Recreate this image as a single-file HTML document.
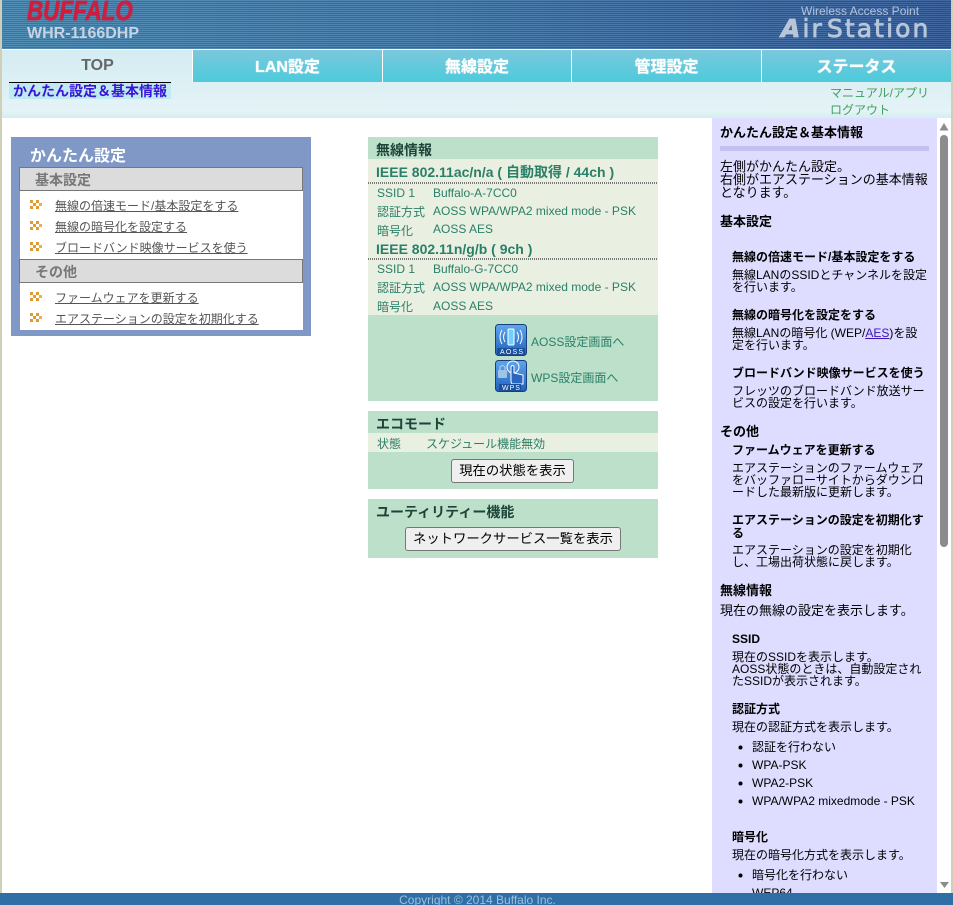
<!DOCTYPE html>
<html lang="ja"><head><meta charset="utf-8"><title>AirStation</title>
<style>
html,body{margin:0;padding:0;width:953px;height:905px;overflow:hidden;background:#fff}
body{position:relative;font-family:"Liberation Sans","Noto Sans CJK JP",sans-serif;font-size:12px}
div,a,span.t{position:absolute;white-space:nowrap}
.t{position:absolute;white-space:nowrap;line-height:16px;height:16px}
.b{font-weight:bold}
.tab{top:50px;height:32px;background:linear-gradient(#7cc8dc,#4ccadc);color:#fff;font-weight:bold;font-size:16px;line-height:35px;text-align:center;border-right:1px solid #fff;box-sizing:border-box;text-shadow:0 0 1px #fff}
.mi{color:#555;text-decoration:underline;font-size:12px;left:55px}
.gh{left:19px;width:284px;box-sizing:border-box;height:24px;background:#dcdcdc;border:1px solid #777;color:#777;font-weight:bold;font-size:14px;line-height:24px;padding-left:15px}
.g{color:#2a7f68;font-size:12px}
.gb{color:#2a7f68;font-size:14px;font-weight:bold}
.h{font-size:14px;font-weight:bold;left:376px;color:#1d4438}
.dot{left:368px;width:290px;height:2px;background:repeating-linear-gradient(90deg,#777 0 1px,transparent 1px 2px)}
.btn{background:#efefef;border:1px solid #767676;border-radius:3px;box-sizing:border-box;color:#000;font-size:13.333px;text-align:center;height:24px;line-height:22px}
.s{font-size:12px;color:#000;line-height:12px;height:12px}
.i{font-size:13px;color:#000;line-height:13px;height:13px}
.sb{font-size:12px;font-weight:bold;color:#000}
.sh{font-size:13px;font-weight:bold;color:#000}
</style></head><body>

<!-- page edges -->
<div style="left:0;top:0;width:2px;height:905px;background:#d0d0b8"></div>
<div style="left:951px;top:0;width:2px;height:905px;background:#d0d0b8"></div>

<!-- header -->
<div style="left:2px;top:0;width:949px;height:49px;background:repeating-linear-gradient(180deg,rgba(255,255,255,.1) 0 1px,rgba(0,0,0,.09) 1px 2px),linear-gradient(90deg,#3f82ad 0%,#3a73a5 45%,#2c5595 100%)"></div>
<div class="b" style="left:27px;top:-3px;font-size:28px;line-height:28px;color:#cc1f40;font-style:italic;transform:scaleX(.8);transform-origin:left;-webkit-text-stroke:.8px #cc1f40">BUFFALO</div>
<div class="b" style="left:27px;top:25px;font-size:16px;line-height:18px;color:#c6d3e2">WHR-1166DHP</div>
<div style="left:801px;top:4px;font-size:12px;line-height:14px;color:#b5c3d8">Wireless Access Point</div>
<div style="left:781px;top:15px;font-size:25px;line-height:28px;color:#b9c6d8;letter-spacing:2.1px;font-family:'DejaVu Sans',sans-serif;-webkit-text-stroke:.8px #b9c6d8"><span style="font-style:italic;font-weight:bold">A</span>ir<span style="margin-left:3px">Station</span></div>

<!-- nav background -->
<div style="left:2px;top:49px;width:949px;height:1px;background:#fff"></div>
<div style="left:2px;top:50px;width:949px;height:68px;background:linear-gradient(#d4ecf2,#e4f3f6 90%,#d2eff2)"></div>
<div class="b" style="left:3px;top:50px;width:189px;height:32px;text-align:center;color:#666;font-size:16px;line-height:32px">TOP</div>
<div class="tab" style="left:193px;width:190px">LAN設定</div>
<div class="tab" style="left:383px;width:189px">無線設定</div>
<div class="tab" style="left:572px;width:190px">管理設定</div>
<div class="tab" style="left:762px;width:189px;border-right:0">ステータス</div>
<div style="left:192px;top:50px;width:1px;height:32px;background:#fff"></div>

<div style="left:9px;top:82px;width:162px;height:17px;background:#bfeaf0;border-top:1px solid #000;box-sizing:border-box"></div>
<div class="b" style="left:13px;top:83px;font-size:14px;line-height:16px;color:#3a14d8">かんたん設定＆基本情報</div>
<div style="left:830px;top:85px;font-size:12px;line-height:16px;color:#3fa05e">マニュアル/アプリ</div>
<div style="left:830px;top:102px;font-size:12px;line-height:16px;color:#3fa05e">ログアウト</div>

<!-- left box -->
<div style="left:11px;top:137px;width:300px;height:199px;background:#7f98c6"></div>
<div style="left:20px;top:191px;width:283px;height:139px;background:#fff"></div>
<div class="b" style="left:30px;top:147px;font-size:16px;line-height:20px;color:#fff">かんたん設定</div>
<div class="gh" style="top:167px">基本設定</div>
<div class="gh" style="top:259px">その他</div>

<svg style="position:absolute;left:0;top:0" width="60" height="330">
<defs><g id="ar" fill="#e09a30"><rect x="0" y="0" width="3" height="3"/><rect x="3" y="3" width="3" height="3"/><rect x="0" y="6" width="3" height="3"/><rect x="6" y="0" width="3" height="3"/><rect x="9" y="3" width="3" height="3" opacity=".8"/><rect x="6" y="6" width="3" height="3"/></g></defs>
<use href="#ar" x="30" y="200"/><use href="#ar" x="30" y="221"/><use href="#ar" x="30" y="242"/><use href="#ar" x="30" y="292"/><use href="#ar" x="30" y="313"/>
</svg>
<a class="t mi" style="top:198px">無線の倍速モード/基本設定をする</a>
<a class="t mi" style="top:219px">無線の暗号化を設定する</a>
<a class="t mi" style="top:240px">ブロードバンド映像サービスを使う</a>
<a class="t mi" style="top:290px">ファームウェアを更新する</a>
<a class="t mi" style="top:311px">エアステーションの設定を初期化する</a>

<!-- center -->
<div style="left:368px;top:137px;width:290px;height:264px;background:#bce0ca"></div>
<div style="left:368px;top:159px;width:290px;height:156px;background:#e9f0e1"></div>
<span class="t h" style="top:142px">無線情報</span>
<span class="t gb" style="left:376px;top:164px">IEEE 802.11ac/n/a ( 自動取得 / 44ch )</span>
<div class="dot" style="top:182px"></div>
<span class="t g" style="left:377px;top:185px">SSID 1</span><span class="t g" style="left:433px;top:185px">Buffalo-A-7CC0</span>
<span class="t g" style="left:377px;top:204px">認証方式</span><span class="t g" style="left:433px;top:203px">AOSS WPA/WPA2 mixed mode - PSK</span>
<span class="t g" style="left:377px;top:223px">暗号化</span><span class="t g" style="left:433px;top:221px">AOSS AES</span>
<span class="t gb" style="left:376px;top:241px">IEEE 802.11n/g/b ( 9ch )</span>
<div class="dot" style="top:258px"></div>
<span class="t g" style="left:377px;top:261px">SSID 1</span><span class="t g" style="left:433px;top:261px">Buffalo-G-7CC0</span>
<span class="t g" style="left:377px;top:280px">認証方式</span><span class="t g" style="left:433px;top:279px">AOSS WPA/WPA2 mixed mode - PSK</span>
<span class="t g" style="left:377px;top:299px">暗号化</span><span class="t g" style="left:433px;top:298px">AOSS AES</span>

<!-- AOSS / WPS icons -->
<svg style="position:absolute;left:495px;top:324px" width="32" height="68" viewBox="0 0 32 68">
<defs><linearGradient id="ic" x1="0" y1="0" x2="0" y2="1"><stop offset="0" stop-color="#5fa6ee"/><stop offset="1" stop-color="#2060bc"/></linearGradient></defs>
<rect x=".5" y=".5" width="31" height="31" rx="3" fill="url(#ic)" stroke="#1a3f78"/>
<rect x="13" y="5" width="6" height="16" rx="1" fill="#6fd0ff" stroke="#fff"/>
<path d="M10 8q-3 5 0 10M7 6q-4 7 0 14M22 8q3 5 0 10M25 6q4 7 0 14" fill="none" stroke="#fff"/>
<rect x="2" y="24" width="28" height="7" fill="#1a4f9c"/>
<text x="5" y="30" font-family="Liberation Sans" font-size="7" fill="#fff" letter-spacing="1.200">AOSS</text>
<rect x=".5" y="36.500" width="31" height="31" rx="3" fill="url(#ic)" stroke="#1a3f78"/>
<rect x="3" y="46" width="9" height="8" rx="1" fill="#9fc4e8"/><path d="M5 46v-2a2.500 2.500 0 0 1 5 0v2" fill="none" stroke="#9fc4e8" stroke-width="1.500"/>
<circle cx="18" cy="43" r="6" fill="none" stroke="#fff"/>
<path d="M16 58V43a1.500 1.500 0 0 1 3 0v6l9 2v9H17z" fill="#2a66c0" stroke="#fff"/>
<rect x="4" y="60" width="22" height="7" fill="#1a4f9c"/>
<text x="7" y="66" font-family="Liberation Sans" font-size="7" fill="#fff" letter-spacing="1">WPS</text>
</svg>
<span class="t g" style="left:531px;top:334px">AOSS設定画面へ</span>
<span class="t g" style="left:531px;top:370px">WPS設定画面へ</span>

<div style="left:368px;top:411px;width:290px;height:78px;background:#bce0ca"></div>
<div style="left:368px;top:433px;width:290px;height:19px;background:#e9f0e1"></div>
<span class="t h" style="top:416px">エコモード</span>
<span class="t g" style="left:377px;top:436px">状態</span><span class="t g" style="left:426px;top:436px">スケジュール機能無効</span>
<div class="btn" style="left:451px;top:459px;width:123px">現在の状態を表示</div>

<div style="left:368px;top:499px;width:290px;height:59px;background:#bce0ca"></div>
<span class="t h" style="top:504px">ユーティリティー機能</span>
<div class="btn" style="left:405px;top:527px;width:216px">ネットワークサービス一覧を表示</div>

<!-- help sidebar -->
<div style="left:712px;top:118px;width:225px;height:775px;background:#dedcff"></div>
<div style="left:720px;top:146px;width:209px;height:5px;background:#c5c0f0"></div>
<span class="t sh" style="left:720px;top:125px">かんたん設定＆基本情報</span>
<span class="t i" style="left:720px;top:160px">左側がかんたん設定。</span>
<span class="t i" style="left:720px;top:173px">右側がエアステーションの基本情報</span>
<span class="t i" style="left:720px;top:186px">となります。</span>
<span class="t sh" style="left:720px;top:214px">基本設定</span>
<span class="t sb" style="left:732px;top:249px">無線の倍速モード/基本設定をする</span>
<span class="t s" style="left:732px;top:269px">無線LANのSSIDとチャンネルを設定</span>
<span class="t s" style="left:732px;top:281px">を行います。</span>
<span class="t sb" style="left:732px;top:307px">無線の暗号化を設定をする</span>
<span class="t s" style="left:732px;top:327px">無線LANの暗号化 (WEP/<u style="color:#3a14b8">AES</u>)を設</span>
<span class="t s" style="left:732px;top:339px">定を行います。</span>
<span class="t sb" style="left:732px;top:365px">ブロードバンド映像サービスを使う</span>
<span class="t s" style="left:732px;top:385px">フレッツのブロードバンド放送サー</span>
<span class="t s" style="left:732px;top:397px">ビスの設定を行います。</span>
<span class="t sh" style="left:720px;top:424px">その他</span>
<span class="t sb" style="left:732px;top:442px">ファームウェアを更新する</span>
<span class="t s" style="left:732px;top:462px">エアステーションのファームウェア</span>
<span class="t s" style="left:732px;top:474px">をバッファローサイトからダウンロ</span>
<span class="t s" style="left:732px;top:486px">ードした最新版に更新します。</span>
<span class="t sb" style="left:732px;top:512px">エアステーションの設定を初期化す</span>
<span class="t sb" style="left:732px;top:525px">る</span>
<span class="t s" style="left:732px;top:544px">エアステーションの設定を初期化</span>
<span class="t s" style="left:732px;top:556px">し、工場出荷状態に戻します。</span>
<span class="t sh" style="left:720px;top:583px">無線情報</span>
<span class="t i" style="left:720px;top:604px">現在の無線の設定を表示します。</span>
<span class="t sb" style="left:732px;top:631px">SSID</span>
<span class="t s" style="left:732px;top:651px">現在のSSIDを表示します。</span>
<span class="t s" style="left:732px;top:663px">AOSS状態のときは、自動設定され</span>
<span class="t s" style="left:732px;top:675px">たSSIDが表示されます。</span>
<span class="t sb" style="left:732px;top:701px">認証方式</span>
<span class="t s" style="left:732px;top:721px">現在の認証方式を表示します。</span>
<span class="t s" style="left:752px;top:741px">認証を行わない</span>
<span class="t s" style="left:752px;top:759px">WPA-PSK</span>
<span class="t s" style="left:752px;top:777px">WPA2-PSK</span>
<span class="t s" style="left:752px;top:795px">WPA/WPA2 mixedmode - PSK</span>
<span class="t sb" style="left:732px;top:829px">暗号化</span>
<span class="t s" style="left:732px;top:849px">現在の暗号化方式を表示します。</span>
<span class="t s" style="left:752px;top:869px">暗号化を行わない</span>
<span class="t s" style="left:752px;top:887px">WEP64</span>
<svg style="position:absolute;left:738px;top:741px" width="6" height="140" fill="#000">
<circle cx="2.500" cy="6.500" r="2"/><circle cx="2.500" cy="24.500" r="2"/><circle cx="2.500" cy="42.500" r="2"/><circle cx="2.500" cy="60.500" r="2"/><circle cx="2.500" cy="134.500" r="2"/>
</svg>

<!-- scrollbar -->
<div style="left:937px;top:118px;width:14px;height:775px;background:#fff"></div>
<svg style="position:absolute;left:937px;top:118px" width="14" height="775" fill="#8c8c8c">
<path d="M2.500 12.500L7 5l4.500 7.500z"/><rect x="3" y="17" width="8" height="412" rx="4"/><path d="M3 764l4.500 6 4.500-6z"/>
</svg>

<!-- footer -->
<div style="left:0;top:893px;width:953px;height:12px;background:#2f6fa5;overflow:hidden"></div>
<div style="left:3px;top:892px;width:949px;height:13px;overflow:hidden;text-align:center;color:#9cc0dc;font-size:12px;line-height:16px">Copyright © 2014 Buffalo Inc.</div>
</body></html>
